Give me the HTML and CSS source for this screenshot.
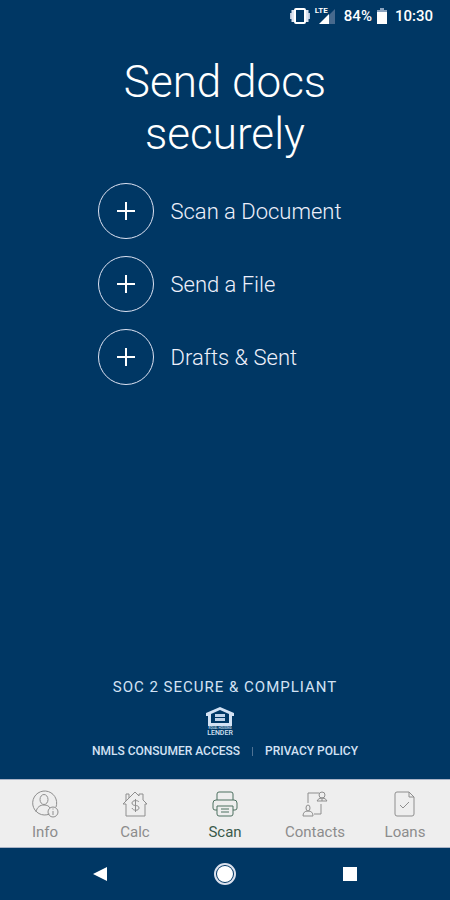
FILE: index.html
```html
<!DOCTYPE html>
<html lang="en">
<head>
    <meta charset="UTF-8">
    <meta name="viewport" content="width=device-width, initial-scale=1.0">
    <title>Send docs securely</title>
    <link rel="stylesheet" href="styles.css">
</head>
<body>

    <header class="status-bar">
        <svg class="vibrate" width="20" height="18" viewBox="0 0 20 18" aria-hidden="true">
            <path d="M1 6v6M19 6v6" stroke="#b4c3d7" stroke-width="2"/>
            <path d="M3 3v12M17 3v12" stroke="#dce4f0" stroke-width="3"/>
            <rect x="5" y="2" width="10" height="14" rx="1" fill="none" stroke="#fff" stroke-width="2"/>
        </svg>
        <div class="signal">
            <svg width="20" height="16" viewBox="0 0 20 16" aria-hidden="true">
                <path d="M20 1v15H5z" fill="#47698d"/>
                <path d="M14 6v10H4z" fill="#fff"/>
            </svg>
            <span class="lte">LTE</span>
        </div>
        <span class="battery-level">84%</span>
        <svg class="battery" width="10" height="16" viewBox="0 0 10 16" aria-hidden="true">
            <path d="M3 0h4v2h3v3H0V2h3z" fill="#8ca4bf"/>
            <path d="M0 4h10v12H0z" fill="#fff"/>
        </svg>
        <span>10:30</span>
    </header>

    <main>
        <h1>Send docs<br>securely</h1>

        <div class="actions">
            <button class="action">
                <span class="circle"><svg width="18" height="20" viewBox="0 0 18 20"><path d="M9 1v18M0 10h18"/></svg></span>
                Scan a Document
            </button>
            <button class="action">
                <span class="circle"><svg width="18" height="20" viewBox="0 0 18 20"><path d="M9 1v18M0 10h18"/></svg></span>
                Send a File
            </button>
            <button class="action">
                <span class="circle"><svg width="18" height="20" viewBox="0 0 18 20"><path d="M9 1v18M0 10h18"/></svg></span>
                Drafts &amp; Sent
            </button>
        </div>

        <div class="legal">
            <p>SOC 2 SECURE &amp; COMPLIANT</p>
            <div class="lender">
                <svg width="28" height="20" viewBox="0 0 28 20" aria-hidden="true">
                    <path d="M14 0L0 6v3h2v10h24V9h2V6z" fill="#d3e2f4"/>
                    <path d="M14 3L5 7v9h18V7z" fill="#003764"/>
                    <path d="M9 7h10v3H9zM9 11h10v3H9z" fill="#bfd2e8"/>
                </svg>
                <span class="housing">EQUAL HOUSING</span>
                <span>LENDER</span>
            </div>
            <div class="links">
                <a href="#">NMLS CONSUMER ACCESS</a>
                <span class="divider"></span>
                <a href="#">PRIVACY POLICY</a>
            </div>
        </div>
    </main>

    <nav class="tabs">
        <a href="#">
            <svg width="28" height="28" viewBox="0 0 28 28">
                <path d="M18.500 24A12 12 0 1 1 25 17M5 22c1-5 4-7 8-7 3 0 5 1 6 3"/>
                <ellipse cx="13" cy="9.500" rx="4" ry="5"/>
                <circle cx="22" cy="22" r="5"/>
                <path d="M22 21v4M22 18.500v1"/>
            </svg>
            Info
        </a>
        <a href="#">
            <svg width="28" height="28" viewBox="0 0 28 28">
                <path d="M5 14v12h19V14M5 14H2L14 2l4 4V4h4v6l4 4h-2M5 11V4h3v4"/>
                <path d="M18 12c-1-2-7-2-7 1 0 4 7 1 7 5 0 3-6 3-7 0M14.500 9v13"/>
            </svg>
            Calc
        </a>
        <a href="#" class="active">
            <svg width="28" height="28" viewBox="0 0 28 28">
                <path d="M6 10V4q0-2 2-2h12q2 0 2 2v6M6 20H4q-2 0-2-2v-5q0-3 3-3h18q3 0 3 3v5q0 2-2 2h-2"/>
                <path d="M6 16h16v8q0 2-2 2H8q-2 0-2-2zM10 19h8M10 22h8"/>
            </svg>
            Scan
        </a>
        <a href="#">
            <svg width="28" height="28" viewBox="0 0 28 28">
                <path d="M7 13V3h11M13 24h7V14"/>
                <circle cx="21" cy="5" r="3"/>
                <path d="M16 11q1-3 5-3t5 3zM21 8v3"/>
                <ellipse cx="7" cy="18" rx="2" ry="3"/>
                <path d="M2 26q0-5 5-5t5 5z"/>
            </svg>
            Contacts
        </a>
        <a href="#">
            <svg width="28" height="28" viewBox="0 0 28 28">
                <path d="M6 2h12l5 5v17q0 2-2 2H6q-2 0-2-2V4q0-2 2-2zM18 2v5h5M9 15l3 3 6-6"/>
            </svg>
            Loans
        </a>
    </nav>

    <footer class="system-nav">
        <button aria-label="Back">
            <svg width="24" height="24" viewBox="0 0 24 24"><path d="M5 12l14-7v14z" fill="#fff"/></svg>
        </button>
        <button aria-label="Home">
            <svg width="24" height="24" viewBox="0 0 24 24">
                <circle cx="12" cy="12" r="10" fill="none" stroke="#dbe1ed" stroke-width="2"/>
                <circle cx="12" cy="12" r="8" fill="#fff"/>
            </svg>
        </button>
        <button aria-label="Recent apps">
            <svg width="24" height="24" viewBox="0 0 24 24"><path d="M5 5h14v14H5z" fill="#fff"/></svg>
        </button>
    </footer>

</body>
</html>
```
FILE: styles.css
```css
* {
    box-sizing: border-box;
}
body {
    margin: 0;
    min-height: 100vh;
    display: flex;
    flex-direction: column;
    font-family: Roboto, sans-serif;
    background-color: #003764;
    color: white;
}
button {
    padding: 0;
    border: none;
    background: none;
    color: inherit;
    font-family: inherit;
    cursor: pointer;
}
a {
    color: inherit;
    text-decoration: none;
}
svg {
    display: block;
}
.status-bar {
    height: 32px;
    padding: 0 17px;
    display: flex;
    align-items: center;
    justify-content: flex-end;
    font-size: 15px;
    font-weight: 500;
}
.signal {
    position: relative;
    margin: 0 9px 0 5px;
}
.lte {
    position: absolute;
    top: -1px;
    left: 0;
    font-size: 8px;
    line-height: 8px;
    font-weight: 700;
}
.battery {
    margin: 0 8px 0 5px;
}
main {
    flex: 1;
    display: flex;
    flex-direction: column;
    align-items: center;
}
h1 {
    margin: 24px 0 23px;
    font-size: 44px;
    line-height: 52px;
    font-weight: 300;
    text-align: center;
}
.actions {
    padding-right: 10px;
    display: flex;
    flex-direction: column;
    gap: 17px;
}
.action {
    display: flex;
    align-items: center;
    gap: 16px;
    font-size: 22px;
    font-weight: 300;
    color: #eef0fb;
}
.circle {
    width: 56px;
    height: 56px;
    display: flex;
    align-items: center;
    justify-content: center;
    border: 1px solid #dde2f2;
    border-radius: 50%;
}
.circle path {
    stroke: white;
    stroke-width: 2;
}
.legal {
    margin-top: auto;
    padding-bottom: 20px;
    display: flex;
    flex-direction: column;
    align-items: center;
    color: #d3e2f4;
}
.legal p {
    margin: 0 0 10px;
    font-size: 15px;
    line-height: 20px;
    letter-spacing: 1px;
}
.lender {
    padding-right: 10px;
    display: flex;
    flex-direction: column;
    align-items: center;
    font-size: 7px;
    line-height: 7px;
    font-weight: 500;
}
.lender .housing {
    font-size: 3px;
    line-height: 3px;
}
.links {
    margin-top: 6px;
    display: flex;
    align-items: center;
    font-size: 12px;
    line-height: 16px;
    font-weight: 500;
}
.divider {
    width: 1px;
    height: 9px;
    margin: 0 12px;
    background-color: #4f7294;
}
.tabs {
    height: 69px;
    padding-top: 10px;
    display: grid;
    grid-template-columns: repeat(5, 1fr);
    background-color: #eee;
    border-top: 1px solid #a9b3c6;
    border-bottom: 1px solid #a9b3c6;
}
.tabs a {
    display: flex;
    flex-direction: column;
    align-items: center;
    gap: 5px;
    font-size: 15px;
    line-height: 18px;
    color: #8c8c8c;
}
.tabs svg {
    fill: none;
    stroke: #8e8e8e;
    stroke-width: 1;
}
.tabs .active {
    color: #3a5a4a;
}
.tabs .active svg {
    stroke: #4d7060;
}
.system-nav {
    height: 52px;
    padding: 0 38px;
    display: grid;
    grid-template-columns: repeat(3, 1fr);
    align-items: center;
    justify-items: center;
}
```
